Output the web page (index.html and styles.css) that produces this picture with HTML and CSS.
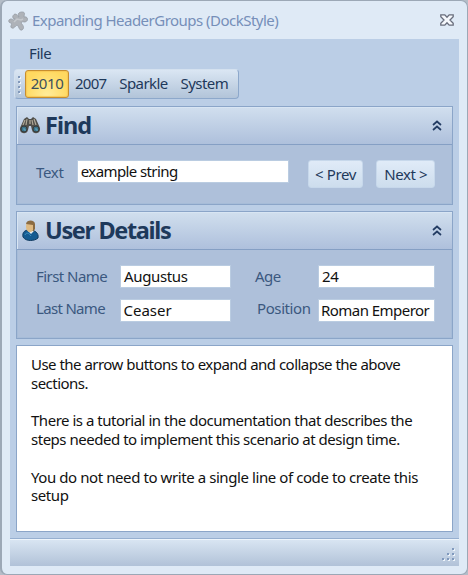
FILE: index.html
```
<!DOCTYPE html>
<html lang="en">
<head>
<meta charset="utf-8">
<title>Expanding HeaderGroups (DockStyle)</title>
<link rel="stylesheet" href="styles.css">
</head>
<body>
<div class="window">
  <header class="titlebar">
    <svg class="app-icon" width="20" height="20" viewBox="0 0 20 20"><path d="M11 6C9 3 11 1 14 1c4 0 2 3 2 5 4-1 5 4 1 5-2 0-3-1-4 1 2 2 4 5 1 7-3 1-3-4-5-5-2 1-3 4-5 3-3-1 1-4-1-5-3 0-3-4 0-4 2 0 3 2 4 0C4 8 4 4 7 3c3 0 2 3 4 3Z" fill="#aeb2b8" stroke="#969ca5" stroke-width=".8"/><path d="m6 11 3-3 4 1 2-1" fill="none" stroke="#c4c8cd" stroke-width="1.500"/></svg>
    <h1 class="title">Expanding HeaderGroups (DockStyle)</h1>
    <svg class="close" width="14" height="12" viewBox="0 0 14 12"><path d="M.8.8h4L7 3.200 9.200.8h4v2L10 6l3.200 3.200v2h-4L7 8.800l-2.200 2.400h-4v-2L4 6 .8 2.800Z" fill="#f5f8fc" stroke="#686d7c" stroke-width="1.300"/></svg>
  </header>
  <main class="client">
    <nav class="menu"><span>File</span></nav>
    <div class="toolbar">
      <svg class="grip" width="4" height="20" viewBox="0 0 4 20"><path d="M3 2v18" stroke="#f0f5fb" stroke-width="2" stroke-dasharray="2 3"/><path d="M2 1v18" stroke="#8299bb" stroke-width="2" stroke-dasharray="2 3"/></svg>
      <span class="tool active">2010</span><span class="tool t2007">2007</span><span class="tool sparkle">Sparkle</span><span class="tool system">System</span>
    </div>
    <section class="group find">
      <div class="group-head">
        <svg width="20" height="17" viewBox="0 0 20 17"><path d="M4 2 7 0l2 2h2l2-2 3 2 4 9c1 6-7 7-8 2L11 9H9l-1 4c-1 5-9 4-8-2Z" fill="#504f4a"/><path d="M5 3 3 8m4-6L6 8m8-6 2 6m-4-5 1 5" stroke="#b0a998" stroke-width="1.200"/><path d="M9 3h2v4H9Z" fill="#8d887c"/><circle cx="4" cy="12" r="3" fill="#3a7188" stroke="#383b3a"/><circle cx="16" cy="12" r="3" fill="#3a7188" stroke="#383b3a"/><path d="M3 12h2v2m10-2h2v2" stroke="#62aac2" fill="none"/></svg>
        <h2>Find</h2>
        <svg class="chev" width="10" height="11" viewBox="0 0 10 11"><path d="M1 5 5 1.500 9 5M1 10 5 6.500 9 10" fill="none" stroke="#233c63" stroke-width="1.700"/></svg>
      </div>
      <div class="find-row">
        <span class="label text-label">Text</span><div class="field example">example string</div>
        <div class="button prev">&lt; Prev</div><div class="button next">Next &gt;</div>
      </div>
    </section>
    <section class="group user">
      <div class="group-head">
        <svg width="20" height="22" viewBox="0 0 20 22"><path d="M3 17c-1-5 2-7 6-7 6 0 10 3 9 8-3 3-12 4-15-1Z" fill="#155b91" stroke="#123c62"/><path d="M5 15c1-3 4-2 6 1" stroke="#3f91c1" fill="none"/><path d="m8 11 3 3 3-3" fill="#e7edf1"/><ellipse cx="10" cy="6.500" rx="4" ry="5.500" fill="#dfba82"/><path d="M6 4c1-5 9-4 9 0v5l-2 3 0-7Z" fill="#8b6c43"/></svg>
        <h2 class="wide">User Details</h2>
        <svg class="chev" width="10" height="11" viewBox="0 0 10 11"><path d="M1 5 5 1.500 9 5M1 10 5 6.500 9 10" fill="none" stroke="#233c63" stroke-width="1.700"/></svg>
      </div>
      <div class="details">
        <span class="label">First Name</span><div class="field">Augustus</div><span class="label right">Age</span><div class="field">24</div>
        <span class="label last">Last Name</span><div class="field lower ceaser">Ceaser</div><span class="label right position">Position</span><div class="field lower emperor">Roman Emperor</div>
      </div>
    </section>
    <section class="notes">
      <p class="usage">Use the arrow buttons to expand and collapse the above<br>sections.</p>
      <p class="tutorial">There is a tutorial in the documentation that describes the<br>steps needed to implement this scenario at design time.</p>
      <p class="setup">You do not need to write a single line of code to create this<br>setup</p>
    </section>
    <footer class="status"><svg width="14" height="14" viewBox="0 0 14 14"><path d="M12 1h2v2h-2zM7 6h2v2H7zM12 6h2v2h-2zM2 11h2v2H2zM7 11h2v2H7zM12 11h2v2h-2z" fill="#eff5fb"/><path d="M11 0h2v2h-2zM6 5h2v2H6zM11 5h2v2h-2zM1 10h2v2H1zM6 10h2v2H6zM11 10h2v2h-2z" fill="#8099bd"/></svg></footer>
  </main>
</div>
</body>
</html>
```
FILE: styles.css
```
* { box-sizing: border-box; }
body { margin: 0; background: #b4bdc8; font: 15px/19px "Noto Sans", "Open Sans", sans-serif; color: #1e395b; letter-spacing: -.4px; overflow: hidden; }
h1, h2, p { margin: 0; }
.window { height: 575px; padding: 0 8px 8px; border: solid #9ca8b6; border-width: 1px 1px 1px 2px; border-radius: 7px; background: #dfeaf6; }
.titlebar { height: 38px; display: flex; align-items: flex-start; }
.app-icon { margin: 10px 4px 0 -2px; }
.title { font-size: 15px; line-height: 20px; font-weight: 400; letter-spacing: -.52px; margin-top: 9px; color: #768fb9; white-space: nowrap; }
.close { margin: 13px 5px 0 auto; }
.client { height: 527px; background: #bbcee6; display: flex; flex-direction: column; }
.menu { height: 30px; padding: 5px 0 0 19px; flex: none; }
.toolbar { width: 225px; height: 30px; margin-left: 4px; display: flex; align-items: center; border: 1px solid #d4e1ef; border-right-color: #8da8cb; border-bottom-color: #8da8cb; border-radius: 4px; background: linear-gradient(#dae6f3, #b2c4d9); flex: none; white-space: nowrap; }
.grip { margin: 1px 0 0 2px; }
.tool { margin: -2px 0 0 9px; }
.tool.active { width: 44px; height: 28px; line-height: 24px; text-align: center; margin: 0 -3px 0 4px; border: 1px solid #c78e2f; border-radius: 3px; background: radial-gradient(ellipse at bottom, #ffed9d, #ffd960 75%); box-shadow: inset 0 0 1px 1px #f8c956; color: #3c4f5c; }
.tool.t2007 { letter-spacing: -.75px; }
.tool.sparkle { margin-left: 13px; letter-spacing: -.6px; }
.tool.system { margin-left: 13px; letter-spacing: -.55px; }
.group { margin: 7px 6px 0; border: 1px solid #8ba5c8; background: #aec0da; box-shadow: inset 0 0 0 1px #a6bcd8; flex: none; }
.find { height: 99px; }
.user { height: 128px; margin-top: 6px; }
.group-head { height: 38px; border-bottom: 1px solid #859fc4; display: flex; align-items: center; padding: 0 10px 0 3px; background: linear-gradient(#d1dfee, #aec0dc); box-shadow: inset 1px 1px #d8e5f3; }
h2 { font-size: 23.500px; line-height: 30px; letter-spacing: -1px; margin: -2px 0 0 5px; color: #1e395b; white-space: nowrap; }
h2.wide { letter-spacing: -1.350px; }
.chev { margin-left: auto; }
.label { color: #3b587f; white-space: nowrap; letter-spacing: -.55px; }
.field { height: 23px; padding: 0 3px; line-height: 20px; color: #111; background: #fff; border: 1px solid #bacce1; white-space: nowrap; overflow: hidden; letter-spacing: -.35px; }
.find-row { display: flex; padding: 15px 17px 0 19px; }
.text-label { width: 41px; padding-top: 3px; letter-spacing: -.3px; }
.find-row .field { width: 213px; }
.find-row .example { letter-spacing: -.6px; }
.button { width: 56px; height: 28px; line-height: 26px; text-align: center; border: 1px solid #c7d8eb; border-radius: 3px; background: linear-gradient(#e0ebf8, #cddded); white-space: nowrap; }
.prev { margin-left: 19px; }
.next { width: 59px; margin-left: 13px; }
.details { display: grid; grid-template-columns: 84px 111px 87px 117px; grid-template-rows: 23px 23px; row-gap: 11px; padding: 15px 0 0 19px; }
.details .label { padding-top: 2px; }
.details .last { padding-top: 0; letter-spacing: -.68px; }
.details .label.right { padding-left: 24px; }
.details .label.position { padding: 0 0 0 26px; letter-spacing: -.4px; }
.details .lower { line-height: 21px; }
.details .ceaser { letter-spacing: 0; padding-left: 2.500px; }
.details .emperor { letter-spacing: -.54px; padding-left: 2px; }
.notes { margin: 6px 6px 0; height: 187px; flex: none; border: 1px solid #8ba5c8; background: #fff; padding: 9px 14px; color: #111; white-space: nowrap; line-height: 18.750px; }
.notes p + p { margin-top: 18.750px; }
.usage { letter-spacing: -.52px; }
.tutorial { letter-spacing: -.48px; }
.setup { letter-spacing: -.42px; }
.status { margin-top: auto; height: 28px; border-top: 1px solid #96afd0; box-shadow: inset 0 1px #edf4fb; background: linear-gradient(#dae6f3, #b1c2d8); display: flex; justify-content: flex-end; align-items: center; padding: 5px 4px 0 0; }
```
